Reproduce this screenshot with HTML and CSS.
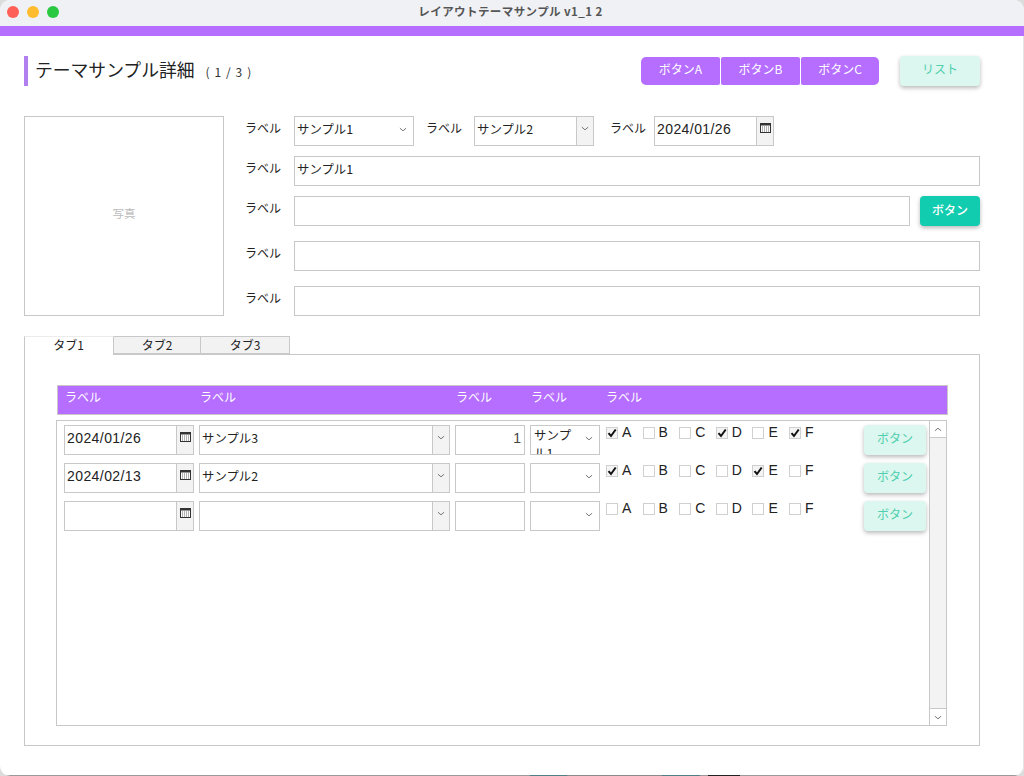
FILE: index.html
```html
<!DOCTYPE html>
<html lang="ja">
<head>
<meta charset="utf-8">
<title>レイアウトテーマサンプル v1_1 2</title>
<link rel="stylesheet" href="styles.css">
</head>
<body>
<svg class="defs" width="0" height="0" aria-hidden="true">
  <defs>
    <symbol id="cal" viewBox="0 0 11 10">
      <rect x="0.5" y="0.5" width="10" height="9" fill="#fff" stroke="#333"/>
      <rect x="0" y="0" width="11" height="2.5" fill="#333"/>
      <path d="M2 4h1M4 4h1M6 4h1M8 4h1M2 6h1M4 6h1M6 6h1M8 6h1M2 8h1M4 8h1M6 8h1M8 8h1" stroke="#666" stroke-width="1"/>
    </symbol>
    <symbol id="chev" viewBox="0 0 9 5">
      <path d="M1 1l3.5 3L8 1" fill="none" stroke="#666" stroke-width="1"/>
    </symbol>
    <symbol id="tick" viewBox="0 0 10 10">
      <path d="M1.5 5.2L4 8L8.7 1.5" fill="none" stroke="#111" stroke-width="2"/>
    </symbol>
  </defs>
</svg>
<div class="window">
  <header class="titlebar">
    <div class="lights"><span class="light red"></span><span class="light yellow"></span><span class="light green"></span></div>
    <div class="wintitle">レイアウトテーマサンプル v1_1 2</div>
  </header>
  <div class="accent"></div>
  <main class="content">
    <section class="head">
      <h1 class="title">テーマサンプル詳細<small class="count">( 1 / 3 )</small></h1>
      <div class="btn-group">
        <button class="btn-purple">ボタンA</button>
        <button class="btn-purple">ボタンB</button>
        <button class="btn-purple">ボタンC</button>
      </div>
      <button class="btn-mint btn-list">リスト</button>
    </section>

    <section class="form">
      <div class="photo">写真</div>
      <div class="fields">
        <div class="row">
          <span class="label label-first">ラベル</span>
          <div class="box w120"><span class="val">サンプル1</span><span class="arrow"><svg class="chev"><use href="#chev"/></svg></span></div>
          <span class="label label-mid">ラベル</span>
          <div class="box w120"><span class="val">サンプル2</span><span class="side"><svg class="chev"><use href="#chev"/></svg></span></div>
          <span class="label label-last">ラベル</span>
          <div class="box w120"><span class="val date">2024/01/26</span><span class="side"><svg class="cal"><use href="#cal"/></svg></span></div>
        </div>
        <div class="row">
          <span class="label label-first">ラベル</span>
          <div class="box grow"><span class="val">サンプル1</span></div>
        </div>
        <div class="row">
          <span class="label label-first">ラベル</span>
          <div class="box grow"></div>
          <button class="btn-teal">ボタン</button>
        </div>
        <div class="row row-wide">
          <span class="label label-first">ラベル</span>
          <div class="box grow"></div>
        </div>
        <div class="row row-wide">
          <span class="label label-first">ラベル</span>
          <div class="box grow"></div>
        </div>
      </div>
    </section>

    <section class="tabs">
      <div class="tabbar">
        <div class="tab tab-active">タブ1</div>
        <div class="tab tab-2">タブ2</div>
        <div class="tab tab-3">タブ3</div>
      </div>
      <div class="panel">
        <div class="grid-head">
          <span class="gh gh-date">ラベル</span>
          <span class="gh gh-name">ラベル</span>
          <span class="gh gh-num">ラベル</span>
          <span class="gh gh-sel">ラベル</span>
          <span class="gh">ラベル</span>
        </div>
        <div class="list">
          <div class="rows">
            <div class="grid-row">
              <div class="box c-date"><span class="val date">2024/01/26</span><span class="side"><svg class="cal"><use href="#cal"/></svg></span></div>
              <div class="box c-name"><span class="val">サンプル3</span><span class="side"><svg class="chev"><use href="#chev"/></svg></span></div>
              <div class="box c-num"><span class="val num">1</span></div>
              <div class="box c-sel"><span class="val wrap">サンプル1</span><span class="arrow arrow-end"><svg class="chev"><use href="#chev"/></svg></span></div>
              <div class="checks">
                <label class="check"><span class="cb on"><svg class="tick"><use href="#tick"/></svg></span>A</label>
                <label class="check"><span class="cb"></span>B</label>
                <label class="check"><span class="cb"></span>C</label>
                <label class="check"><span class="cb on"><svg class="tick"><use href="#tick"/></svg></span>D</label>
                <label class="check"><span class="cb"></span>E</label>
                <label class="check"><span class="cb on"><svg class="tick"><use href="#tick"/></svg></span>F</label>
              </div>
              <button class="btn-mint btn-row">ボタン</button>
            </div>
            <div class="grid-row">
              <div class="box c-date"><span class="val date">2024/02/13</span><span class="side"><svg class="cal"><use href="#cal"/></svg></span></div>
              <div class="box c-name"><span class="val">サンプル2</span><span class="side"><svg class="chev"><use href="#chev"/></svg></span></div>
              <div class="box c-num"></div>
              <div class="box c-sel"><span class="arrow arrow-end"><svg class="chev"><use href="#chev"/></svg></span></div>
              <div class="checks">
                <label class="check"><span class="cb on"><svg class="tick"><use href="#tick"/></svg></span>A</label>
                <label class="check"><span class="cb"></span>B</label>
                <label class="check"><span class="cb"></span>C</label>
                <label class="check"><span class="cb"></span>D</label>
                <label class="check"><span class="cb on"><svg class="tick"><use href="#tick"/></svg></span>E</label>
                <label class="check"><span class="cb"></span>F</label>
              </div>
              <button class="btn-mint btn-row">ボタン</button>
            </div>
            <div class="grid-row">
              <div class="box c-date"><span class="val date"></span><span class="side"><svg class="cal"><use href="#cal"/></svg></span></div>
              <div class="box c-name"><span class="val"></span><span class="side"><svg class="chev"><use href="#chev"/></svg></span></div>
              <div class="box c-num"></div>
              <div class="box c-sel"><span class="arrow arrow-end"><svg class="chev"><use href="#chev"/></svg></span></div>
              <div class="checks">
                <label class="check"><span class="cb"></span>A</label>
                <label class="check"><span class="cb"></span>B</label>
                <label class="check"><span class="cb"></span>C</label>
                <label class="check"><span class="cb"></span>D</label>
                <label class="check"><span class="cb"></span>E</label>
                <label class="check"><span class="cb"></span>F</label>
              </div>
              <button class="btn-mint btn-row">ボタン</button>
            </div>
          </div>
          <div class="scrollbar">
            <span class="sb-btn sb-up"><svg class="chev chev-up"><use href="#chev"/></svg></span>
            <span class="sb-track"></span>
            <span class="sb-btn sb-down"><svg class="chev"><use href="#chev"/></svg></span>
          </div>
        </div>
      </div>
    </section>
  </main>
  <div class="dockline"></div>
</div>
</body>
</html>
```

FILE: styles.css
```css
* { box-sizing: border-box; }
html, body { margin: 0; padding: 0; background: #dcdcdc; }
body {
  width: 1024px;
  height: 776px;
  overflow: hidden;
  font-family: "Noto Sans CJK JP", "Liberation Sans", sans-serif;
  font-size: 12px;
  color: #222;
}
.defs { position: absolute; }
.window {
  width: 1024px;
  height: 776px;
  background: #fff;
  border-radius: 10px;
  overflow: hidden;
  display: flex;
  flex-direction: column;
  box-shadow: inset -1px 0 0 #e4e4e4;
}
.titlebar {
  height: 26px;
  background: #f0f1f4;
  display: flex;
  align-items: center;
  justify-content: center;
  position: relative;
  flex: none;
}
.lights { position: absolute; left: 7px; top: 6px; display: flex; gap: 8px; }
.light { width: 12px; height: 12px; border-radius: 50%; }
.red { background: #fe5f57; }
.yellow { background: #febc2e; }
.green { background: #29c840; }
.wintitle {
  font-size: 11.5px;
  font-weight: 700;
  color: #555;
  letter-spacing: 0.42px;
  margin-top: -4px;
  margin-right: 3px;
}
.accent { height: 10px; background: #b56eff; flex: none; }
.content { flex: 1; padding: 20px 44px 0 24px; display: flex; flex-direction: column; min-height: 0; }

.head { display: flex; align-items: flex-start; height: 30px; }
.title {
  margin: 0;
  height: 30px;
  border-left: 4px solid #b27ff0;
  padding-left: 7px;
  font-size: 17.8px;
  line-height: 26px;
  font-weight: 400;
  color: #222;
  flex: 1;
}
.count { font-size: 12px; letter-spacing: 1.1px; margin-left: 11px; color: #333; }
.btn-group { display: flex; gap: 1px; margin-top: 1px; margin-right: 21px; }
button { font-family: inherit; border: 0; padding: 0; cursor: pointer; }
.btn-purple {
  width: 79px;
  height: 28px;
  background: #b56eff;
  color: #fff;
  font-size: 12px;
  line-height: 24px;
  padding-bottom: 5px;
  border-radius: 2px;
}
.btn-group .btn-purple:first-child { border-radius: 5px 2px 2px 5px; }
.btn-group .btn-purple:last-child { width: 78px; border-radius: 2px 5px 5px 2px; }
.btn-mint {
  background: #dcf7ef;
  color: #4fcfae;
  font-size: 12px;
  border-radius: 4px;
  box-shadow: 0 2px 4px rgba(0, 0, 0, 0.28);
}
.btn-list { width: 80px; height: 30px; padding-bottom: 6px; }

.form { display: flex; margin-top: 30px; gap: 21px; }
.photo {
  width: 200px;
  height: 200px;
  border: 1px solid #c8c8c8;
  display: flex;
  align-items: center;
  justify-content: center;
  color: #bbb;
  font-size: 11.5px;
  padding-bottom: 6px;
}
.fields { flex: 1; display: flex; flex-direction: column; gap: 10px; }
.row { display: flex; align-items: flex-start; height: 30px; }
.row-wide { margin-top: 5px; }
.label { line-height: 24px; height: 24px; color: #222; flex: none; }
.label-first { width: 49px; }
.label-mid { margin-left: 12px; width: 48px; }
.label-last { margin-left: 16px; width: 44px; }

.box {
  height: 30px;
  border: 1px solid #c8c8c8;
  background: #fff;
  display: flex;
  align-items: stretch;
  overflow: hidden;
  flex: none;
}
.w120 { width: 120px; }
.grow { flex: 1; }
.val {
  flex: 1;
  min-width: 0;
  padding-left: 2px;
  font-size: 12.4px;
  line-height: 24px;
  color: #222;
  white-space: nowrap;
}
.date {
  font-family: "Liberation Sans", sans-serif;
  font-size: 14px;
  letter-spacing: 0.42px;
  line-height: 24px;
}
.num {
  text-align: right;
  padding-right: 3px;
  font-family: "Liberation Sans", sans-serif;
  font-size: 14px;
  line-height: 24px;
  color: #444;
}
.wrap { flex: none; width: 44px; white-space: normal; padding-left: 3px; line-height: 18px; letter-spacing: 0.2px; }
.side {
  width: 17px;
  flex: none;
  background: #f3f3f3;
  border-left: 1px solid #c8c8c8;
  display: flex;
  justify-content: center;
  align-items: flex-start;
  padding-top: 9px;
}
.arrow { width: 14px; flex: none; display: flex; justify-content: flex-start; padding-top: 10px; }
.arrow-end { margin-left: auto; }
.chev { width: 8px; height: 5px; display: block; }
.cal { width: 11px; height: 10px; display: block; margin-top: -3px; }
.chev-up { transform: rotate(180deg); }

.btn-teal {
  width: 60px;
  height: 30px;
  margin-left: 10px;
  background: #12ccb0;
  color: #fff;
  font-size: 12px;
  font-weight: 500;
  border-radius: 4px;
  padding-bottom: 4px;
  box-shadow: 0 2px 4px rgba(0, 0, 0, 0.28);
}

.tabs { margin-top: 20px; flex: 1; display: flex; flex-direction: column; margin-bottom: 29px; min-height: 0; }
.tabbar { display: flex; height: 19px; flex: none; position: relative; z-index: 1; }
.tab {
  height: 18px;
  border: 1px solid #c8c8c8;
  border-left: 0;
  background: #f2f2f2;
  text-align: center;
  line-height: 16px;
  color: #222;
}
.tab-active {
  width: 90px;
  height: 19px;
  background: #fff;
  border-bottom: 0;
  border-top-color: #ececec;
  border-left: 1px solid #c8c8c8;
  padding-right: 1px;
}
.tab-2 { width: 87px; }
.tab-3 { width: 89px; }
.panel {
  flex: 1;
  margin-top: -1px;
  border: 1px solid #c8c8c8;
  padding: 30px 32px 19px 32px;
  display: flex;
  flex-direction: column;
  min-height: 0;
}
.grid-head {
  height: 30px;
  flex: none;
  background: #b56eff;
  border: 1px solid #c8c8c8;
  margin-right: -1px;
  display: flex;
  padding-left: 7px;
  color: #fff;
  font-size: 12px;
  line-height: 22px;
}
.gh-date { width: 135px; }
.gh-name { width: 256px; }
.gh-num { width: 75px; }
.gh-sel { width: 75px; }
.list {
  flex: 1;
  margin: 5px 0 0 -1px;
  border: 1px solid #c8c8c8;
  display: flex;
  min-height: 0;
}
.rows { flex: 1; min-width: 0; padding: 4px 2px 0 7px; display: flex; flex-direction: column; gap: 8px; }
.grid-row { display: flex; height: 30px; align-items: flex-start; gap: 5px; }
.c-date { width: 130px; }
.c-name { width: 251px; }
.c-num { width: 70px; }
.c-sel { width: 70px; }
.checks { display: flex; margin-left: 1px; width: 252px; padding-top: 1px; }
.check {
  width: 36.6px;
  flex: none;
  display: flex;
  align-items: center;
  gap: 4px;
  height: 12px;
  font-family: "Liberation Sans", sans-serif;
  font-size: 14px;
  line-height: 12px;
  color: #222;
}
.cb {
  width: 12px;
  height: 12px;
  flex: none;
  border: 1px solid #d0d0d0;
  background: #fff;
  margin-top: 2px;
  display: flex;
  align-items: center;
  justify-content: center;
}
.cb.on { background: #f4f4f4; }
.tick { width: 10px; height: 10px; display: block; }
.btn-row { width: 62px; height: 30px; flex: none; margin-left: 1px; padding-bottom: 6px; }
.scrollbar {
  width: 17px;
  flex: none;
  border-left: 1px solid #c8c8c8;
  background: #f3f3f3;
  display: flex;
  flex-direction: column;
}
.sb-btn {
  height: 17px;
  flex: none;
  background: #fff;
  display: flex;
  align-items: center;
  justify-content: center;
}
.sb-up { border-bottom: 1px solid #c8c8c8; }
.sb-down { border-top: 1px solid #c8c8c8; }
.sb-track { flex: 1; }
.dockline {
  height: 1px;
  flex: none;
  background: linear-gradient(90deg, #9a9a9a 0 530px, #4f7f88 530px 567px, #8a8a8a 567px 662px, #4f7f88 662px 700px, #9a9a9a 700px 708px, #222 708px 740px, #9a9a9a 740px);
}
```
